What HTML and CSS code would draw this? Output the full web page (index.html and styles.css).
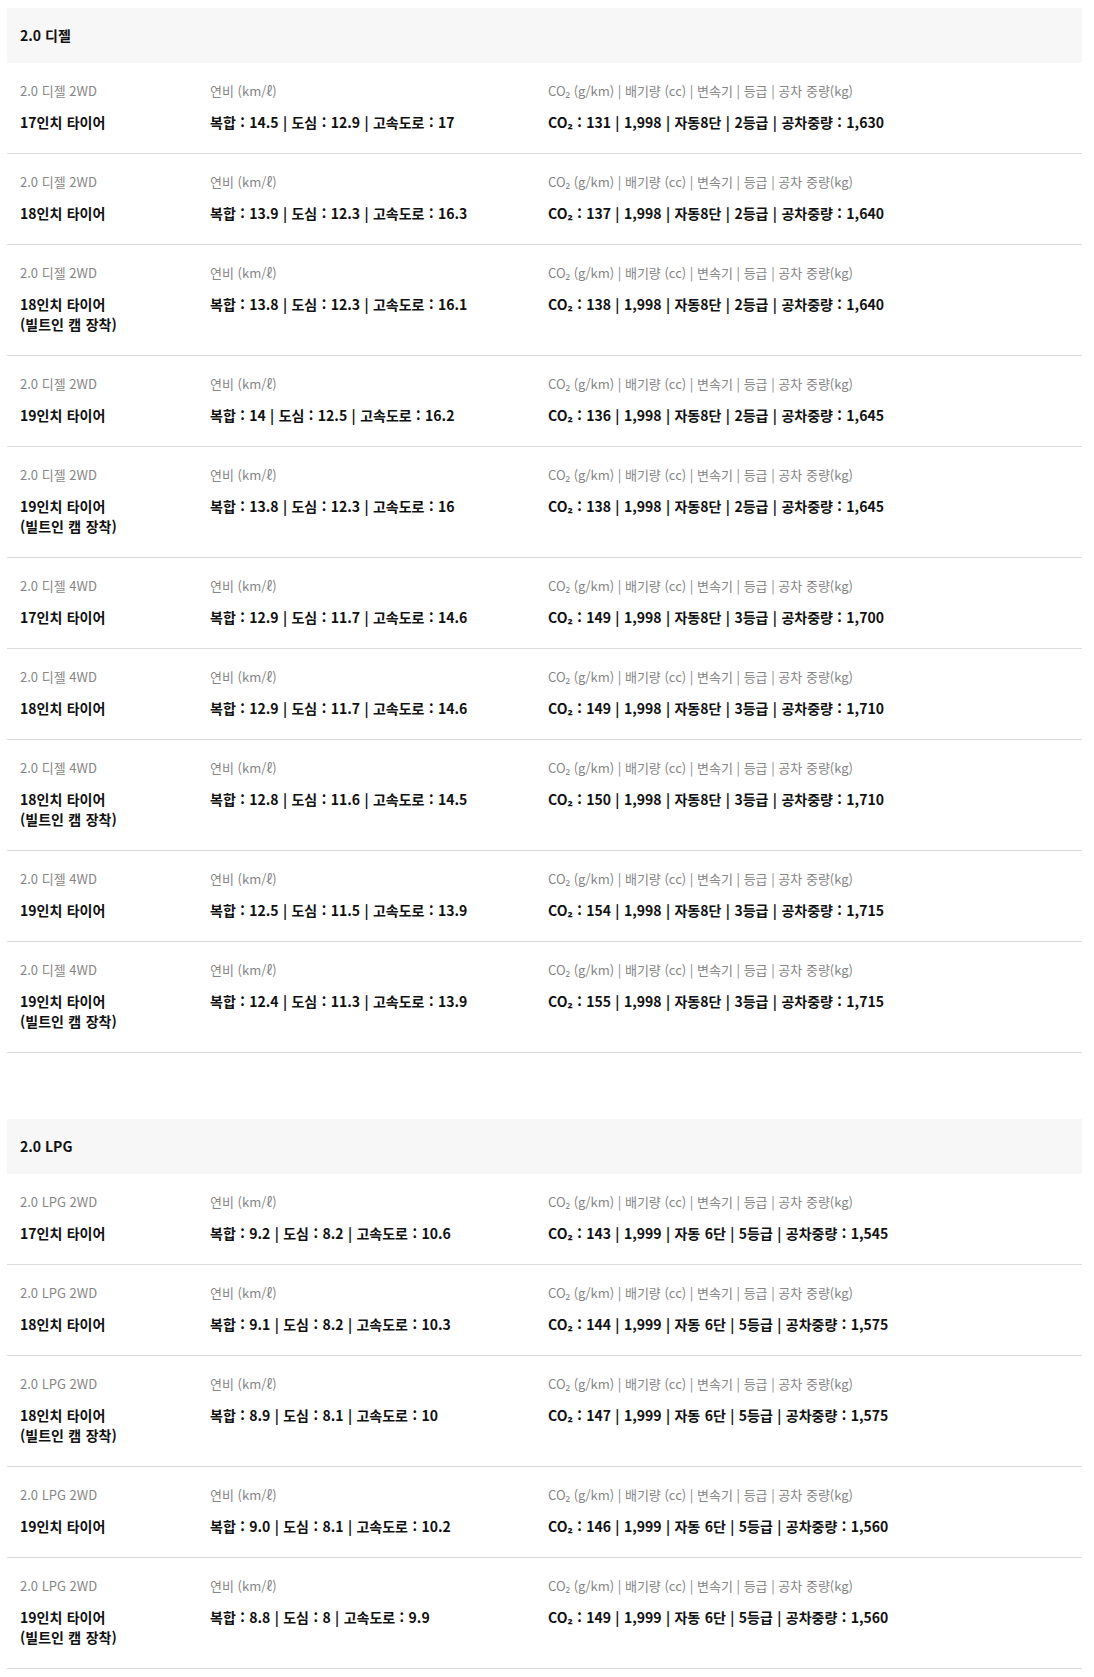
FILE: index.html
```html
<!DOCTYPE html>
<html lang="ko">
<head>
    <meta charset="UTF-8">
    <meta name="viewport" content="width=device-width, initial-scale=1.0">
    <title>제원 - 연비</title>
    <link rel="stylesheet" href="styles.css">
</head>
<body>

    <div class="spec-wrap">
        <section class="spec-group">
            <h3 class="spec-title">2.0 디젤</h3>
            <ul class="spec-list">
                <li class="spec-row">
                    <div class="cell"><p class="label">2.0 디젤 2WD</p><p class="value">17인치 타이어</p></div>
                    <div class="cell"><p class="label">연비 (km/ℓ)</p><p class="value">복합 : 14.5 | 도심 : 12.9 | 고속도로 : 17</p></div>
                    <div class="cell"><p class="label">CO₂ (g/km) | 배기량 (cc) | 변속기 | 등급 | 공차 중량(kg)</p><p class="value">CO₂ : 131 | 1,998 | 자동8단 | 2등급 | 공차중량 : 1,630</p></div>
                </li>
                <li class="spec-row">
                    <div class="cell"><p class="label">2.0 디젤 2WD</p><p class="value">18인치 타이어</p></div>
                    <div class="cell"><p class="label">연비 (km/ℓ)</p><p class="value">복합 : 13.9 | 도심 : 12.3 | 고속도로 : 16.3</p></div>
                    <div class="cell"><p class="label">CO₂ (g/km) | 배기량 (cc) | 변속기 | 등급 | 공차 중량(kg)</p><p class="value">CO₂ : 137 | 1,998 | 자동8단 | 2등급 | 공차중량 : 1,640</p></div>
                </li>
                <li class="spec-row">
                    <div class="cell"><p class="label">2.0 디젤 2WD</p><p class="value">18인치 타이어<br>(빌트인 캠 장착)</p></div>
                    <div class="cell"><p class="label">연비 (km/ℓ)</p><p class="value">복합 : 13.8 | 도심 : 12.3 | 고속도로 : 16.1</p></div>
                    <div class="cell"><p class="label">CO₂ (g/km) | 배기량 (cc) | 변속기 | 등급 | 공차 중량(kg)</p><p class="value">CO₂ : 138 | 1,998 | 자동8단 | 2등급 | 공차중량 : 1,640</p></div>
                </li>
                <li class="spec-row">
                    <div class="cell"><p class="label">2.0 디젤 2WD</p><p class="value">19인치 타이어</p></div>
                    <div class="cell"><p class="label">연비 (km/ℓ)</p><p class="value">복합 : 14 | 도심 : 12.5 | 고속도로 : 16.2</p></div>
                    <div class="cell"><p class="label">CO₂ (g/km) | 배기량 (cc) | 변속기 | 등급 | 공차 중량(kg)</p><p class="value">CO₂ : 136 | 1,998 | 자동8단 | 2등급 | 공차중량 : 1,645</p></div>
                </li>
                <li class="spec-row">
                    <div class="cell"><p class="label">2.0 디젤 2WD</p><p class="value">19인치 타이어<br>(빌트인 캠 장착)</p></div>
                    <div class="cell"><p class="label">연비 (km/ℓ)</p><p class="value">복합 : 13.8 | 도심 : 12.3 | 고속도로 : 16</p></div>
                    <div class="cell"><p class="label">CO₂ (g/km) | 배기량 (cc) | 변속기 | 등급 | 공차 중량(kg)</p><p class="value">CO₂ : 138 | 1,998 | 자동8단 | 2등급 | 공차중량 : 1,645</p></div>
                </li>
                <li class="spec-row">
                    <div class="cell"><p class="label">2.0 디젤 4WD</p><p class="value">17인치 타이어</p></div>
                    <div class="cell"><p class="label">연비 (km/ℓ)</p><p class="value">복합 : 12.9 | 도심 : 11.7 | 고속도로 : 14.6</p></div>
                    <div class="cell"><p class="label">CO₂ (g/km) | 배기량 (cc) | 변속기 | 등급 | 공차 중량(kg)</p><p class="value">CO₂ : 149 | 1,998 | 자동8단 | 3등급 | 공차중량 : 1,700</p></div>
                </li>
                <li class="spec-row">
                    <div class="cell"><p class="label">2.0 디젤 4WD</p><p class="value">18인치 타이어</p></div>
                    <div class="cell"><p class="label">연비 (km/ℓ)</p><p class="value">복합 : 12.9 | 도심 : 11.7 | 고속도로 : 14.6</p></div>
                    <div class="cell"><p class="label">CO₂ (g/km) | 배기량 (cc) | 변속기 | 등급 | 공차 중량(kg)</p><p class="value">CO₂ : 149 | 1,998 | 자동8단 | 3등급 | 공차중량 : 1,710</p></div>
                </li>
                <li class="spec-row">
                    <div class="cell"><p class="label">2.0 디젤 4WD</p><p class="value">18인치 타이어<br>(빌트인 캠 장착)</p></div>
                    <div class="cell"><p class="label">연비 (km/ℓ)</p><p class="value">복합 : 12.8 | 도심 : 11.6 | 고속도로 : 14.5</p></div>
                    <div class="cell"><p class="label">CO₂ (g/km) | 배기량 (cc) | 변속기 | 등급 | 공차 중량(kg)</p><p class="value">CO₂ : 150 | 1,998 | 자동8단 | 3등급 | 공차중량 : 1,710</p></div>
                </li>
                <li class="spec-row">
                    <div class="cell"><p class="label">2.0 디젤 4WD</p><p class="value">19인치 타이어</p></div>
                    <div class="cell"><p class="label">연비 (km/ℓ)</p><p class="value">복합 : 12.5 | 도심 : 11.5 | 고속도로 : 13.9</p></div>
                    <div class="cell"><p class="label">CO₂ (g/km) | 배기량 (cc) | 변속기 | 등급 | 공차 중량(kg)</p><p class="value">CO₂ : 154 | 1,998 | 자동8단 | 3등급 | 공차중량 : 1,715</p></div>
                </li>
                <li class="spec-row">
                    <div class="cell"><p class="label">2.0 디젤 4WD</p><p class="value">19인치 타이어<br>(빌트인 캠 장착)</p></div>
                    <div class="cell"><p class="label">연비 (km/ℓ)</p><p class="value">복합 : 12.4 | 도심 : 11.3 | 고속도로 : 13.9</p></div>
                    <div class="cell"><p class="label">CO₂ (g/km) | 배기량 (cc) | 변속기 | 등급 | 공차 중량(kg)</p><p class="value">CO₂ : 155 | 1,998 | 자동8단 | 3등급 | 공차중량 : 1,715</p></div>
                </li>
            </ul>
        </section>

        <section class="spec-group">
            <h3 class="spec-title">2.0 LPG</h3>
            <ul class="spec-list">
                <li class="spec-row">
                    <div class="cell"><p class="label">2.0 LPG 2WD</p><p class="value">17인치 타이어</p></div>
                    <div class="cell"><p class="label">연비 (km/ℓ)</p><p class="value">복합 : 9.2 | 도심 : 8.2 | 고속도로 : 10.6</p></div>
                    <div class="cell"><p class="label">CO₂ (g/km) | 배기량 (cc) | 변속기 | 등급 | 공차 중량(kg)</p><p class="value">CO₂ : 143 | 1,999 | 자동 6단 | 5등급 | 공차중량 : 1,545</p></div>
                </li>
                <li class="spec-row">
                    <div class="cell"><p class="label">2.0 LPG 2WD</p><p class="value">18인치 타이어</p></div>
                    <div class="cell"><p class="label">연비 (km/ℓ)</p><p class="value">복합 : 9.1 | 도심 : 8.2 | 고속도로 : 10.3</p></div>
                    <div class="cell"><p class="label">CO₂ (g/km) | 배기량 (cc) | 변속기 | 등급 | 공차 중량(kg)</p><p class="value">CO₂ : 144 | 1,999 | 자동 6단 | 5등급 | 공차중량 : 1,575</p></div>
                </li>
                <li class="spec-row">
                    <div class="cell"><p class="label">2.0 LPG 2WD</p><p class="value">18인치 타이어<br>(빌트인 캠 장착)</p></div>
                    <div class="cell"><p class="label">연비 (km/ℓ)</p><p class="value">복합 : 8.9 | 도심 : 8.1 | 고속도로 : 10</p></div>
                    <div class="cell"><p class="label">CO₂ (g/km) | 배기량 (cc) | 변속기 | 등급 | 공차 중량(kg)</p><p class="value">CO₂ : 147 | 1,999 | 자동 6단 | 5등급 | 공차중량 : 1,575</p></div>
                </li>
                <li class="spec-row">
                    <div class="cell"><p class="label">2.0 LPG 2WD</p><p class="value">19인치 타이어</p></div>
                    <div class="cell"><p class="label">연비 (km/ℓ)</p><p class="value">복합 : 9.0 | 도심 : 8.1 | 고속도로 : 10.2</p></div>
                    <div class="cell"><p class="label">CO₂ (g/km) | 배기량 (cc) | 변속기 | 등급 | 공차 중량(kg)</p><p class="value">CO₂ : 146 | 1,999 | 자동 6단 | 5등급 | 공차중량 : 1,560</p></div>
                </li>
                <li class="spec-row">
                    <div class="cell"><p class="label">2.0 LPG 2WD</p><p class="value">19인치 타이어<br>(빌트인 캠 장착)</p></div>
                    <div class="cell"><p class="label">연비 (km/ℓ)</p><p class="value">복합 : 8.8 | 도심 : 8 | 고속도로 : 9.9</p></div>
                    <div class="cell"><p class="label">CO₂ (g/km) | 배기량 (cc) | 변속기 | 등급 | 공차 중량(kg)</p><p class="value">CO₂ : 149 | 1,999 | 자동 6단 | 5등급 | 공차중량 : 1,560</p></div>
                </li>
            </ul>
        </section>
    </div>

</body>
</html>
```

FILE: styles.css
```css
body {
    margin: 0;
    padding: 0;
    background-color: #ffffff;
    color: #111;
    font-family: "Noto Sans CJK KR", "Noto Sans", sans-serif;
}
.spec-wrap {
    padding: 8px 12px 0 7px;
}
.spec-group + .spec-group {
    margin-top: 66px;
}
.spec-title {
    margin: 0;
    height: 55px;
    padding: 0 13px;
    background-color: #f7f7f7;
    font-size: 14px;
    font-weight: 700;
    line-height: 55px;
}
.spec-list {
    list-style: none;
    margin: 0;
    padding: 0;
}
.spec-row {
    display: grid;
    grid-template-columns: 190px 338px 1fr;
    padding: 18px 13px 21px;
    border-bottom: 1px solid #dcdcdc;
}
.cell p {
    margin: 0;
}
.label {
    font-size: 13px;
    line-height: 20px;
    color: #868686;
}
.value {
    margin-top: 11px !important;
    font-size: 14px;
    line-height: 20px;
    font-weight: 700;
    color: #111;
    word-spacing: 0.5px;
}
```
